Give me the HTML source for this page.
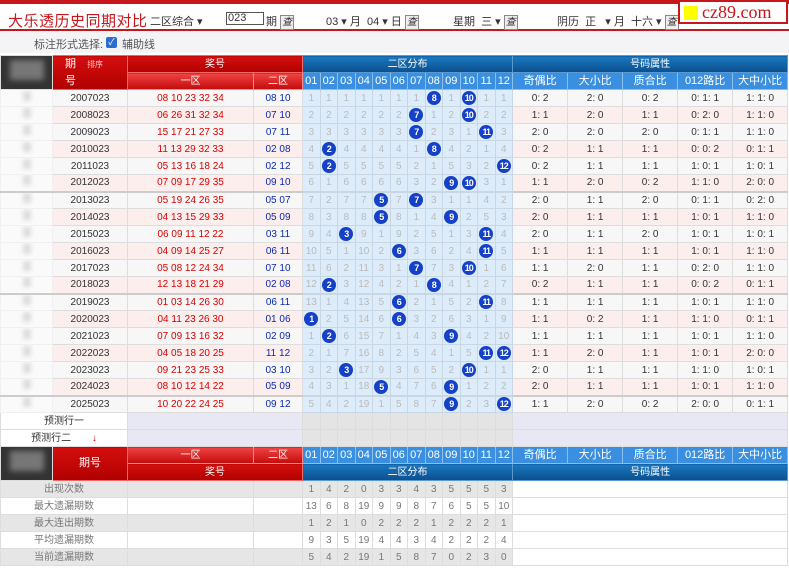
<!DOCTYPE html>
<html><head><meta charset="utf-8"><style>
*{margin:0;padding:0;box-sizing:border-box}
body{width:789px;height:570px;overflow:hidden;background:#fff;font-family:"Liberation Sans","Noto Sans CJK SC",sans-serif;font-size:11px;color:#333;position:relative}
.top{position:absolute;left:0;top:0;width:789px;height:31px;border-top:4px solid #c8161d;border-bottom:2px solid #c8161d;background:#fff}
.top .t{position:absolute;left:8px;top:6px;font-size:15px;color:#c8161d;letter-spacing:0.5px}
.top span{position:absolute;top:9px;font-size:11px;color:#333}
.btn{display:inline-block;border:1px solid #888;background:#eee;font-size:10px;padding:0 1px;height:15px;line-height:13px}
.inp{position:absolute;left:226px;top:8px;width:38px;height:13px;border:1px solid #555;font-size:11px;line-height:11px;padding-left:1px}
.logo{position:absolute;left:678px;top:0;width:110px;height:24px;border:2px solid #c8161d;background:#fff;font-family:"Liberation Serif",serif;font-size:18px;color:#c8161d;line-height:20px;padding-left:22px}
.logo i{position:absolute;left:4px;top:4px;width:14px;height:14px;background:#ff0}
.sub{position:absolute;left:0;top:31px;width:789px;height:22px;background:#f4f4f6;color:#555}
.sub span{position:absolute;left:34px;top:5px}
.cb{position:absolute;left:106px;top:6px;width:11px;height:11px;background:#2a6fd0;border-radius:2px;color:#fff;font-size:9px;line-height:11px;text-align:center}
table{position:absolute;left:0;top:55px;border-collapse:collapse;table-layout:fixed;width:787px}
td{height:17px;border:1px solid #ddd;text-align:center;white-space:nowrap;overflow:hidden;padding:0;font-size:10px;line-height:15px}
.r{background:linear-gradient(#d40e0e,#b00000);color:#fff;border-color:#e66}
.r2{background:linear-gradient(#f04444,#c40a0a);color:#fff;border-color:#f88}
.b{background:linear-gradient(#1a78c0,#0b4f8f);color:#fff;border-color:#5a9ad0}
.b2{background:#3a8fe0;color:#fff;border-color:#8bc0ee;font-size:11px}
.dk{background:#333}
.dk i{display:inline-block;width:34px;height:20px;background:#777;filter:blur(3px)}
tr.a td{background:#f7f7f7}tr.p td{background:#fdeeee}
tr.a td.d,tr.p td.d{background:#dcecfa;color:#bbb;border-color:#c9d6e3}
tr td.l{background:#fafafa;border-color:#f0f0f0}
.l i{display:inline-block;width:8px;height:10px;background:#ddd;filter:blur(2px)}
.m{color:#d00}.s{color:#0a2ab0}
b{display:inline-block;width:14px;height:14px;border-radius:50%;background:#1540c8;color:#fff;font-size:9px;line-height:14px;font-weight:bold;letter-spacing:-1px;vertical-align:middle}
tr.sep td{border-top:2px solid #ccc}
tr.pr td{background:#e8e8f4;border-color:#ddd}
tr.pr td.w{background:#fff}
tr.pr td.g{background:#e4e4e4}
tr.st td{background:#e6e6e6;color:#777}
tr.sw td{background:#fff;color:#777}
</style></head><body>
<div class="top">
<div class="t">大乐透历史同期对比</div>
<span style="left:150px">二区综合 ▾</span>
<div class="inp">023</div>
<span style="left:266px">期 <i class="btn">查</i></span>
<span style="left:326px">03 ▾ 月 &nbsp;04 ▾ 日 <i class="btn">查</i></span>
<span style="left:453px">星期 &nbsp;三 ▾ <i class="btn">查</i></span>
<span style="left:557px">阴历 &nbsp;正 &nbsp;&nbsp;▾ 月 &nbsp;十六 ▾ <i class="btn">查</i></span>
</div>
<div class="logo"><i></i>cz89.com</div>
<div class="sub"><span>标注形式选择: </span><div class="cb">✓</div><span style="left:122px">辅助线</span></div>
<table>
<colgroup><col style="width:52px"><col style="width:75px"><col style="width:126px"><col style="width:49px"><col span="12" style="width:17.5px"><col span="5" style="width:55px"></colgroup>
<tr><td class="dk" rowspan="2"><i></i></td><td class="r" rowspan="2" style="font-size:11px;text-align:left;padding-left:12px;line-height:16px">期 <span style="font-size:8px;color:#fcc;margin-left:8px">排序</span><br>号</td><td class="r" colspan="2">奖号</td><td class="b" colspan="12">二区分布</td><td class="b" colspan="5">号码属性</td></tr>
<tr><td class="r2">一区</td><td class="r2">二区</td><td class="b2">01</td><td class="b2">02</td><td class="b2">03</td><td class="b2">04</td><td class="b2">05</td><td class="b2">06</td><td class="b2">07</td><td class="b2">08</td><td class="b2">09</td><td class="b2">10</td><td class="b2">11</td><td class="b2">12</td><td class="b2">奇偶比</td><td class="b2">大小比</td><td class="b2">质合比</td><td class="b2">012路比</td><td class="b2">大中小比</td></tr>
<tr class="a"><td class="l"><i></i></td><td>2007023</td><td class="m">08 10 23 32 34</td><td class="s">08 10</td><td class="d">1</td><td class="d">1</td><td class="d">1</td><td class="d">1</td><td class="d">1</td><td class="d">1</td><td class="d">1</td><td class="d"><b>8</b></td><td class="d">1</td><td class="d"><b>10</b></td><td class="d">1</td><td class="d">1</td><td>0: 2</td><td>2: 0</td><td>0: 2</td><td>0: 1: 1</td><td>1: 1: 0</td></tr>
<tr class="p"><td class="l"><i></i></td><td>2008023</td><td class="m">06 26 31 32 34</td><td class="s">07 10</td><td class="d">2</td><td class="d">2</td><td class="d">2</td><td class="d">2</td><td class="d">2</td><td class="d">2</td><td class="d"><b>7</b></td><td class="d">1</td><td class="d">2</td><td class="d"><b>10</b></td><td class="d">2</td><td class="d">2</td><td>1: 1</td><td>2: 0</td><td>1: 1</td><td>0: 2: 0</td><td>1: 1: 0</td></tr>
<tr class="a"><td class="l"><i></i></td><td>2009023</td><td class="m">15 17 21 27 33</td><td class="s">07 11</td><td class="d">3</td><td class="d">3</td><td class="d">3</td><td class="d">3</td><td class="d">3</td><td class="d">3</td><td class="d"><b>7</b></td><td class="d">2</td><td class="d">3</td><td class="d">1</td><td class="d"><b>11</b></td><td class="d">3</td><td>2: 0</td><td>2: 0</td><td>2: 0</td><td>0: 1: 1</td><td>1: 1: 0</td></tr>
<tr class="p"><td class="l"><i></i></td><td>2010023</td><td class="m">11 13 29 32 33</td><td class="s">02 08</td><td class="d">4</td><td class="d"><b>2</b></td><td class="d">4</td><td class="d">4</td><td class="d">4</td><td class="d">4</td><td class="d">1</td><td class="d"><b>8</b></td><td class="d">4</td><td class="d">2</td><td class="d">1</td><td class="d">4</td><td>0: 2</td><td>1: 1</td><td>1: 1</td><td>0: 0: 2</td><td>0: 1: 1</td></tr>
<tr class="a"><td class="l"><i></i></td><td>2011023</td><td class="m">05 13 16 18 24</td><td class="s">02 12</td><td class="d">5</td><td class="d"><b>2</b></td><td class="d">5</td><td class="d">5</td><td class="d">5</td><td class="d">5</td><td class="d">2</td><td class="d">1</td><td class="d">5</td><td class="d">3</td><td class="d">2</td><td class="d"><b>12</b></td><td>0: 2</td><td>1: 1</td><td>1: 1</td><td>1: 0: 1</td><td>1: 0: 1</td></tr>
<tr class="p"><td class="l"><i></i></td><td>2012023</td><td class="m">07 09 17 29 35</td><td class="s">09 10</td><td class="d">6</td><td class="d">1</td><td class="d">6</td><td class="d">6</td><td class="d">6</td><td class="d">6</td><td class="d">3</td><td class="d">2</td><td class="d"><b>9</b></td><td class="d"><b>10</b></td><td class="d">3</td><td class="d">1</td><td>1: 1</td><td>2: 0</td><td>0: 2</td><td>1: 1: 0</td><td>2: 0: 0</td></tr>
<tr class="a sep"><td class="l"><i></i></td><td>2013023</td><td class="m">05 19 24 26 35</td><td class="s">05 07</td><td class="d">7</td><td class="d">2</td><td class="d">7</td><td class="d">7</td><td class="d"><b>5</b></td><td class="d">7</td><td class="d"><b>7</b></td><td class="d">3</td><td class="d">1</td><td class="d">1</td><td class="d">4</td><td class="d">2</td><td>2: 0</td><td>1: 1</td><td>2: 0</td><td>0: 1: 1</td><td>0: 2: 0</td></tr>
<tr class="p"><td class="l"><i></i></td><td>2014023</td><td class="m">04 13 15 29 33</td><td class="s">05 09</td><td class="d">8</td><td class="d">3</td><td class="d">8</td><td class="d">8</td><td class="d"><b>5</b></td><td class="d">8</td><td class="d">1</td><td class="d">4</td><td class="d"><b>9</b></td><td class="d">2</td><td class="d">5</td><td class="d">3</td><td>2: 0</td><td>1: 1</td><td>1: 1</td><td>1: 0: 1</td><td>1: 1: 0</td></tr>
<tr class="a"><td class="l"><i></i></td><td>2015023</td><td class="m">06 09 11 12 22</td><td class="s">03 11</td><td class="d">9</td><td class="d">4</td><td class="d"><b>3</b></td><td class="d">9</td><td class="d">1</td><td class="d">9</td><td class="d">2</td><td class="d">5</td><td class="d">1</td><td class="d">3</td><td class="d"><b>11</b></td><td class="d">4</td><td>2: 0</td><td>1: 1</td><td>2: 0</td><td>1: 0: 1</td><td>1: 0: 1</td></tr>
<tr class="p"><td class="l"><i></i></td><td>2016023</td><td class="m">04 09 14 25 27</td><td class="s">06 11</td><td class="d">10</td><td class="d">5</td><td class="d">1</td><td class="d">10</td><td class="d">2</td><td class="d"><b>6</b></td><td class="d">3</td><td class="d">6</td><td class="d">2</td><td class="d">4</td><td class="d"><b>11</b></td><td class="d">5</td><td>1: 1</td><td>1: 1</td><td>1: 1</td><td>1: 0: 1</td><td>1: 1: 0</td></tr>
<tr class="a"><td class="l"><i></i></td><td>2017023</td><td class="m">05 08 12 24 34</td><td class="s">07 10</td><td class="d">11</td><td class="d">6</td><td class="d">2</td><td class="d">11</td><td class="d">3</td><td class="d">1</td><td class="d"><b>7</b></td><td class="d">7</td><td class="d">3</td><td class="d"><b>10</b></td><td class="d">1</td><td class="d">6</td><td>1: 1</td><td>2: 0</td><td>1: 1</td><td>0: 2: 0</td><td>1: 1: 0</td></tr>
<tr class="p"><td class="l"><i></i></td><td>2018023</td><td class="m">12 13 18 21 29</td><td class="s">02 08</td><td class="d">12</td><td class="d"><b>2</b></td><td class="d">3</td><td class="d">12</td><td class="d">4</td><td class="d">2</td><td class="d">1</td><td class="d"><b>8</b></td><td class="d">4</td><td class="d">1</td><td class="d">2</td><td class="d">7</td><td>0: 2</td><td>1: 1</td><td>1: 1</td><td>0: 0: 2</td><td>0: 1: 1</td></tr>
<tr class="a sep"><td class="l"><i></i></td><td>2019023</td><td class="m">01 03 14 26 30</td><td class="s">06 11</td><td class="d">13</td><td class="d">1</td><td class="d">4</td><td class="d">13</td><td class="d">5</td><td class="d"><b>6</b></td><td class="d">2</td><td class="d">1</td><td class="d">5</td><td class="d">2</td><td class="d"><b>11</b></td><td class="d">8</td><td>1: 1</td><td>1: 1</td><td>1: 1</td><td>1: 0: 1</td><td>1: 1: 0</td></tr>
<tr class="p"><td class="l"><i></i></td><td>2020023</td><td class="m">04 11 23 26 30</td><td class="s">01 06</td><td class="d"><b>1</b></td><td class="d">2</td><td class="d">5</td><td class="d">14</td><td class="d">6</td><td class="d"><b>6</b></td><td class="d">3</td><td class="d">2</td><td class="d">6</td><td class="d">3</td><td class="d">1</td><td class="d">9</td><td>1: 1</td><td>0: 2</td><td>1: 1</td><td>1: 1: 0</td><td>0: 1: 1</td></tr>
<tr class="a"><td class="l"><i></i></td><td>2021023</td><td class="m">07 09 13 16 32</td><td class="s">02 09</td><td class="d">1</td><td class="d"><b>2</b></td><td class="d">6</td><td class="d">15</td><td class="d">7</td><td class="d">1</td><td class="d">4</td><td class="d">3</td><td class="d"><b>9</b></td><td class="d">4</td><td class="d">2</td><td class="d">10</td><td>1: 1</td><td>1: 1</td><td>1: 1</td><td>1: 0: 1</td><td>1: 1: 0</td></tr>
<tr class="p"><td class="l"><i></i></td><td>2022023</td><td class="m">04 05 18 20 25</td><td class="s">11 12</td><td class="d">2</td><td class="d">1</td><td class="d">7</td><td class="d">16</td><td class="d">8</td><td class="d">2</td><td class="d">5</td><td class="d">4</td><td class="d">1</td><td class="d">5</td><td class="d"><b>11</b></td><td class="d"><b>12</b></td><td>1: 1</td><td>2: 0</td><td>1: 1</td><td>1: 0: 1</td><td>2: 0: 0</td></tr>
<tr class="a"><td class="l"><i></i></td><td>2023023</td><td class="m">09 21 23 25 33</td><td class="s">03 10</td><td class="d">3</td><td class="d">2</td><td class="d"><b>3</b></td><td class="d">17</td><td class="d">9</td><td class="d">3</td><td class="d">6</td><td class="d">5</td><td class="d">2</td><td class="d"><b>10</b></td><td class="d">1</td><td class="d">1</td><td>2: 0</td><td>1: 1</td><td>1: 1</td><td>1: 1: 0</td><td>1: 0: 1</td></tr>
<tr class="p"><td class="l"><i></i></td><td>2024023</td><td class="m">08 10 12 14 22</td><td class="s">05 09</td><td class="d">4</td><td class="d">3</td><td class="d">1</td><td class="d">18</td><td class="d"><b>5</b></td><td class="d">4</td><td class="d">7</td><td class="d">6</td><td class="d"><b>9</b></td><td class="d">1</td><td class="d">2</td><td class="d">2</td><td>2: 0</td><td>1: 1</td><td>1: 1</td><td>1: 0: 1</td><td>1: 1: 0</td></tr>
<tr class="a sep"><td class="l"><i></i></td><td>2025023</td><td class="m">10 20 22 24 25</td><td class="s">09 12</td><td class="d">5</td><td class="d">4</td><td class="d">2</td><td class="d">19</td><td class="d">1</td><td class="d">5</td><td class="d">8</td><td class="d">7</td><td class="d"><b>9</b></td><td class="d">2</td><td class="d">3</td><td class="d"><b>12</b></td><td>1: 1</td><td>2: 0</td><td>0: 2</td><td>2: 0: 0</td><td>0: 1: 1</td></tr>
<tr class="pr"><td class="w" colspan="2">预测行一</td><td colspan="2"></td><td class="g"></td><td class="g"></td><td class="g"></td><td class="g"></td><td class="g"></td><td class="g"></td><td class="g"></td><td class="g"></td><td class="g"></td><td class="g"></td><td class="g"></td><td class="g"></td><td colspan="5"></td></tr>
<tr class="pr"><td class="w" colspan="2">预测行二 <span style="color:#d00;margin-left:18px">↓</span></td><td colspan="2"></td><td class="g"></td><td class="g"></td><td class="g"></td><td class="g"></td><td class="g"></td><td class="g"></td><td class="g"></td><td class="g"></td><td class="g"></td><td class="g"></td><td class="g"></td><td class="g"></td><td colspan="5"></td></tr>
<tr><td class="dk" rowspan="2"><i></i></td><td class="r" rowspan="2" style="font-size:11px">期号</td><td class="r2">一区</td><td class="r2">二区</td><td class="b2">01</td><td class="b2">02</td><td class="b2">03</td><td class="b2">04</td><td class="b2">05</td><td class="b2">06</td><td class="b2">07</td><td class="b2">08</td><td class="b2">09</td><td class="b2">10</td><td class="b2">11</td><td class="b2">12</td><td class="b2">奇偶比</td><td class="b2">大小比</td><td class="b2">质合比</td><td class="b2">012路比</td><td class="b2">大中小比</td></tr>
<tr><td class="r" colspan="2">奖号</td><td class="b" colspan="12">二区分布</td><td class="b" colspan="5">号码属性</td></tr>
<tr class="st"><td colspan="2">出现次数</td><td></td><td></td><td>1</td><td>4</td><td>2</td><td>0</td><td>3</td><td>3</td><td>4</td><td>3</td><td>5</td><td>5</td><td>5</td><td>3</td><td colspan="5" style="background:#fff"></td></tr>
<tr class="sw"><td colspan="2">最大遗漏期数</td><td></td><td></td><td>13</td><td>6</td><td>8</td><td>19</td><td>9</td><td>9</td><td>8</td><td>7</td><td>6</td><td>5</td><td>5</td><td>10</td><td colspan="5"></td></tr>
<tr class="st"><td colspan="2">最大连出期数</td><td></td><td></td><td>1</td><td>2</td><td>1</td><td>0</td><td>2</td><td>2</td><td>2</td><td>1</td><td>2</td><td>2</td><td>2</td><td>1</td><td colspan="5" style="background:#fff"></td></tr>
<tr class="sw"><td colspan="2">平均遗漏期数</td><td></td><td></td><td>9</td><td>3</td><td>5</td><td>19</td><td>4</td><td>4</td><td>3</td><td>4</td><td>2</td><td>2</td><td>2</td><td>4</td><td colspan="5"></td></tr>
<tr class="st"><td colspan="2">当前遗漏期数</td><td></td><td></td><td>5</td><td>4</td><td>2</td><td>19</td><td>1</td><td>5</td><td>8</td><td>7</td><td>0</td><td>2</td><td>3</td><td>0</td><td colspan="5" style="background:#fff"></td></tr>
</table>
</body></html>
